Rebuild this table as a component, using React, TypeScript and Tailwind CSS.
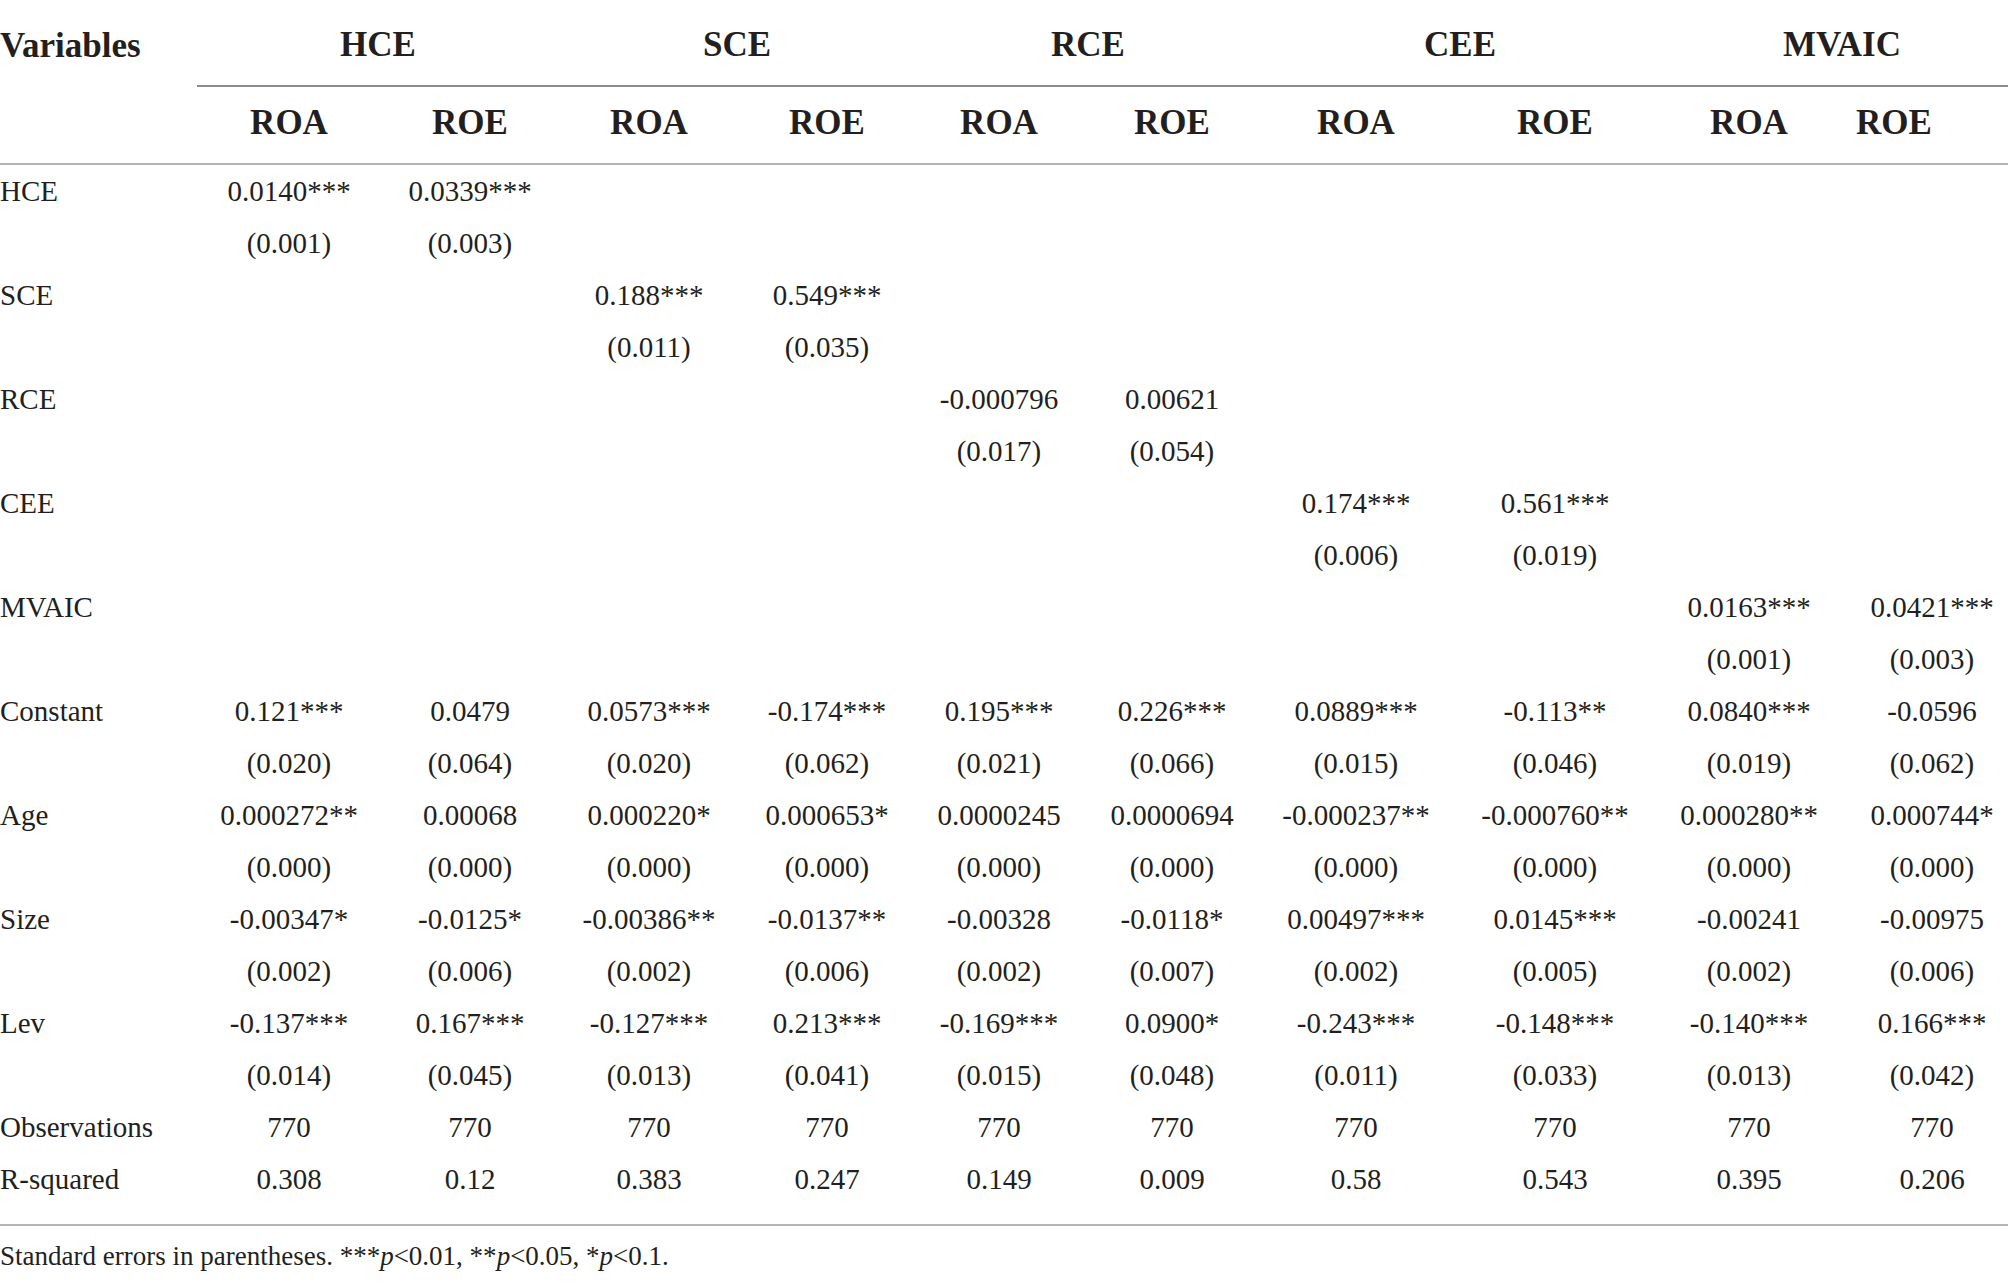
const groups = ["HCE", "SCE", "RCE", "CEE", "MVAIC"];

const rows: { label: string; values: string[] }[] = [
  { label: "HCE", values: ["0.0140***", "0.0339***", "", "", "", "", "", "", "", ""] },
  { label: "", values: ["(0.001)", "(0.003)", "", "", "", "", "", "", "", ""] },
  { label: "SCE", values: ["", "", "0.188***", "0.549***", "", "", "", "", "", ""] },
  { label: "", values: ["", "", "(0.011)", "(0.035)", "", "", "", "", "", ""] },
  { label: "RCE", values: ["", "", "", "", "-0.000796", "0.00621", "", "", "", ""] },
  { label: "", values: ["", "", "", "", "(0.017)", "(0.054)", "", "", "", ""] },
  { label: "CEE", values: ["", "", "", "", "", "", "0.174***", "0.561***", "", ""] },
  { label: "", values: ["", "", "", "", "", "", "(0.006)", "(0.019)", "", ""] },
  { label: "MVAIC", values: ["", "", "", "", "", "", "", "", "0.0163***", "0.0421***"] },
  { label: "", values: ["", "", "", "", "", "", "", "", "(0.001)", "(0.003)"] },
  {
    label: "Constant",
    values: ["0.121***", "0.0479", "0.0573***", "-0.174***", "0.195***", "0.226***", "0.0889***", "-0.113**", "0.0840***", "-0.0596"],
  },
  {
    label: "",
    values: ["(0.020)", "(0.064)", "(0.020)", "(0.062)", "(0.021)", "(0.066)", "(0.015)", "(0.046)", "(0.019)", "(0.062)"],
  },
  {
    label: "Age",
    values: ["0.000272**", "0.00068", "0.000220*", "0.000653*", "0.0000245", "0.0000694", "-0.000237**", "-0.000760**", "0.000280**", "0.000744*"],
  },
  {
    label: "",
    values: ["(0.000)", "(0.000)", "(0.000)", "(0.000)", "(0.000)", "(0.000)", "(0.000)", "(0.000)", "(0.000)", "(0.000)"],
  },
  {
    label: "Size",
    values: ["-0.00347*", "-0.0125*", "-0.00386**", "-0.0137**", "-0.00328", "-0.0118*", "0.00497***", "0.0145***", "-0.00241", "-0.00975"],
  },
  {
    label: "",
    values: ["(0.002)", "(0.006)", "(0.002)", "(0.006)", "(0.002)", "(0.007)", "(0.002)", "(0.005)", "(0.002)", "(0.006)"],
  },
  {
    label: "Lev",
    values: ["-0.137***", "0.167***", "-0.127***", "0.213***", "-0.169***", "0.0900*", "-0.243***", "-0.148***", "-0.140***", "0.166***"],
  },
  {
    label: "",
    values: ["(0.014)", "(0.045)", "(0.013)", "(0.041)", "(0.015)", "(0.048)", "(0.011)", "(0.033)", "(0.013)", "(0.042)"],
  },
  { label: "Observations", values: ["770", "770", "770", "770", "770", "770", "770", "770", "770", "770"] },
  {
    label: "R-squared",
    values: ["0.308", "0.12", "0.383", "0.247", "0.149", "0.009", "0.58", "0.543", "0.395", "0.206"],
  },
];

export default function App() {
  return (
    <div className="w-[2008px] h-[1285px] overflow-hidden bg-white text-[#231f20] font-['Liberation_Serif',serif]">
      <div className="w-[2025px] grid grid-cols-[197px_184px_178px_180px_176px_168px_178px_190px_208px_180px_186px]">
        {/* group headers */}
        <div className="h-[87px] flex items-center pt-[3px] text-[35px] font-bold leading-none">
          Variables
        </div>
        {groups.map((g) => (
          <div
            key={g}
            className="col-span-2 h-[87px] flex items-center justify-center pt-[3px] text-[35px] font-bold leading-none border-b-2 border-[#8c8c8c]"
          >
            {g}
          </div>
        ))}

        {/* sub headers */}
        <div className="h-[78px] border-b-2 border-[#b4b4b4]" />
        {groups.map((g) => (
          <div key={g + "-sub"} className="contents">
            <div className="h-[78px] flex items-center justify-center pb-[5px] text-[35px] font-bold leading-none border-b-2 border-[#b4b4b4]">
              ROA
            </div>
            <div
              className={
                g === "MVAIC"
                  ? "h-[78px] flex items-center justify-center pb-[5px] pr-[76px] text-[35px] font-bold leading-none border-b-2 border-[#b4b4b4]"
                  : "h-[78px] flex items-center justify-center pb-[5px] text-[35px] font-bold leading-none border-b-2 border-[#b4b4b4]"
              }
            >
              ROE
            </div>
          </div>
        ))}

        {/* body */}
        {rows.map((row, i) => (
          <div key={i} className="contents">
            <div className="h-[52px] flex items-center text-[29px] leading-none">{row.label}</div>
            {row.values.map((v, j) => (
              <div key={j} className="h-[52px] flex items-center justify-center text-[29px] leading-none whitespace-nowrap">
                {v}
              </div>
            ))}
          </div>
        ))}

        <div className="col-span-11 h-[21px] border-b-2 border-[#b4b4b4]" />
      </div>

      <p className="mt-[12px] text-[27px] leading-[36px]">
        Standard errors in parentheses. ***<i>p</i>&lt;0.01, **<i>p</i>&lt;0.05, *<i>p</i>&lt;0.1.
      </p>
    </div>
  );
}
